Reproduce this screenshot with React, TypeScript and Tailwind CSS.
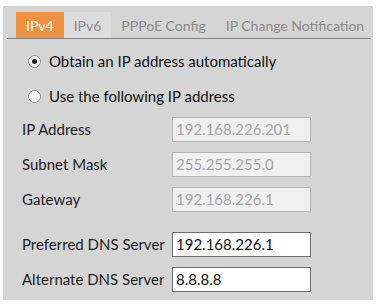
import React from "react";

const font = { fontFamily: 'Lato, "Open Sans", sans-serif' };

function Radio({ checked }: { checked?: boolean }) {
  return (
    <span className="w-[13px] h-[13px] rounded-full border border-[#8c8c8c] bg-gradient-to-br from-[#f4f4f4] to-white flex items-center justify-center shrink-0">
      {checked && <span className="w-[5px] h-[5px] rounded-full bg-[#1a1a1a]" />}
    </span>
  );
}

function Field({
  label,
  value,
  disabled,
  className = "",
}: {
  label: string;
  value: string;
  disabled?: boolean;
  className?: string;
}) {
  return (
    <div className={`flex items-center h-[25px] ${className}`}>
      <span className="w-[150px] text-[15px] text-[#1e1e1e] whitespace-nowrap">{label}</span>
      <div
        className={
          disabled
            ? "w-[139px] h-[25px] border border-[#b4b4b4] bg-[#f0f0f0] text-[#a5a5a5] text-[15px] pl-[3px] flex items-center"
            : "w-[139px] h-[25px] border border-[#6e6e6e] bg-white text-[#111] text-[15px] pl-[3px] flex items-center"
        }
      >
        {value}
      </div>
    </div>
  );
}

export default function App() {
  const tabs = ["IPv4", "IPv6", "PPPoE Config", "IP Change Notification"];
  return (
    <div className="w-[381px] h-[307px] bg-white pt-[6px] pl-[3px]" style={font}>
      <div className="w-[370px] h-[294px] bg-[#d5d5d5] pt-[6px] pl-[4px] pr-[2px]">
        {/* tabs */}
        <div className="flex h-[27px] border-b border-[#808080] pl-[9px]">
          {tabs.map((t, i) => (
            <div
              key={t}
              className={
                i === 0
                  ? "h-[26px] px-[10px] flex items-center whitespace-nowrap bg-[#f0913f] text-white text-[14px]"
                  : i === 1
                  ? "h-[26px] px-[10px] flex items-center whitespace-nowrap bg-[#dcdcdc] text-[#8a8a8a] text-[14px]"
                  : "h-[26px] px-[10px] flex items-center whitespace-nowrap text-[#8a8a8a] text-[14px]"
              }
            >
              {t}
            </div>
          ))}
        </div>

        {/* content */}
        <div className="pt-[10px] pl-[15px]">
          <div className="flex items-center h-[25px] pl-[6px] gap-[8px]">
            <Radio checked />
            <span className="text-[15px] text-[#111]">Obtain an IP address automatically</span>
          </div>
          <div className="flex items-center h-[25px] mt-[10px] pl-[6px] gap-[8px]">
            <Radio />
            <span className="text-[15px] text-[#111]">Use the following IP address</span>
          </div>

          <Field label="IP Address" value="192.168.226.201" disabled className="mt-[8px]" />
          <Field label="Subnet Mask" value="255.255.255.0" disabled className="mt-[10px]" />
          <Field label="Gateway" value="192.168.226.1" disabled className="mt-[10px]" />

          <Field label="Preferred DNS Server" value="192.168.226.1" className="mt-[20px]" />
          <Field label="Alternate DNS Server" value="8.8.8.8" className="mt-[10px]" />
        </div>
      </div>
    </div>
  );
}
